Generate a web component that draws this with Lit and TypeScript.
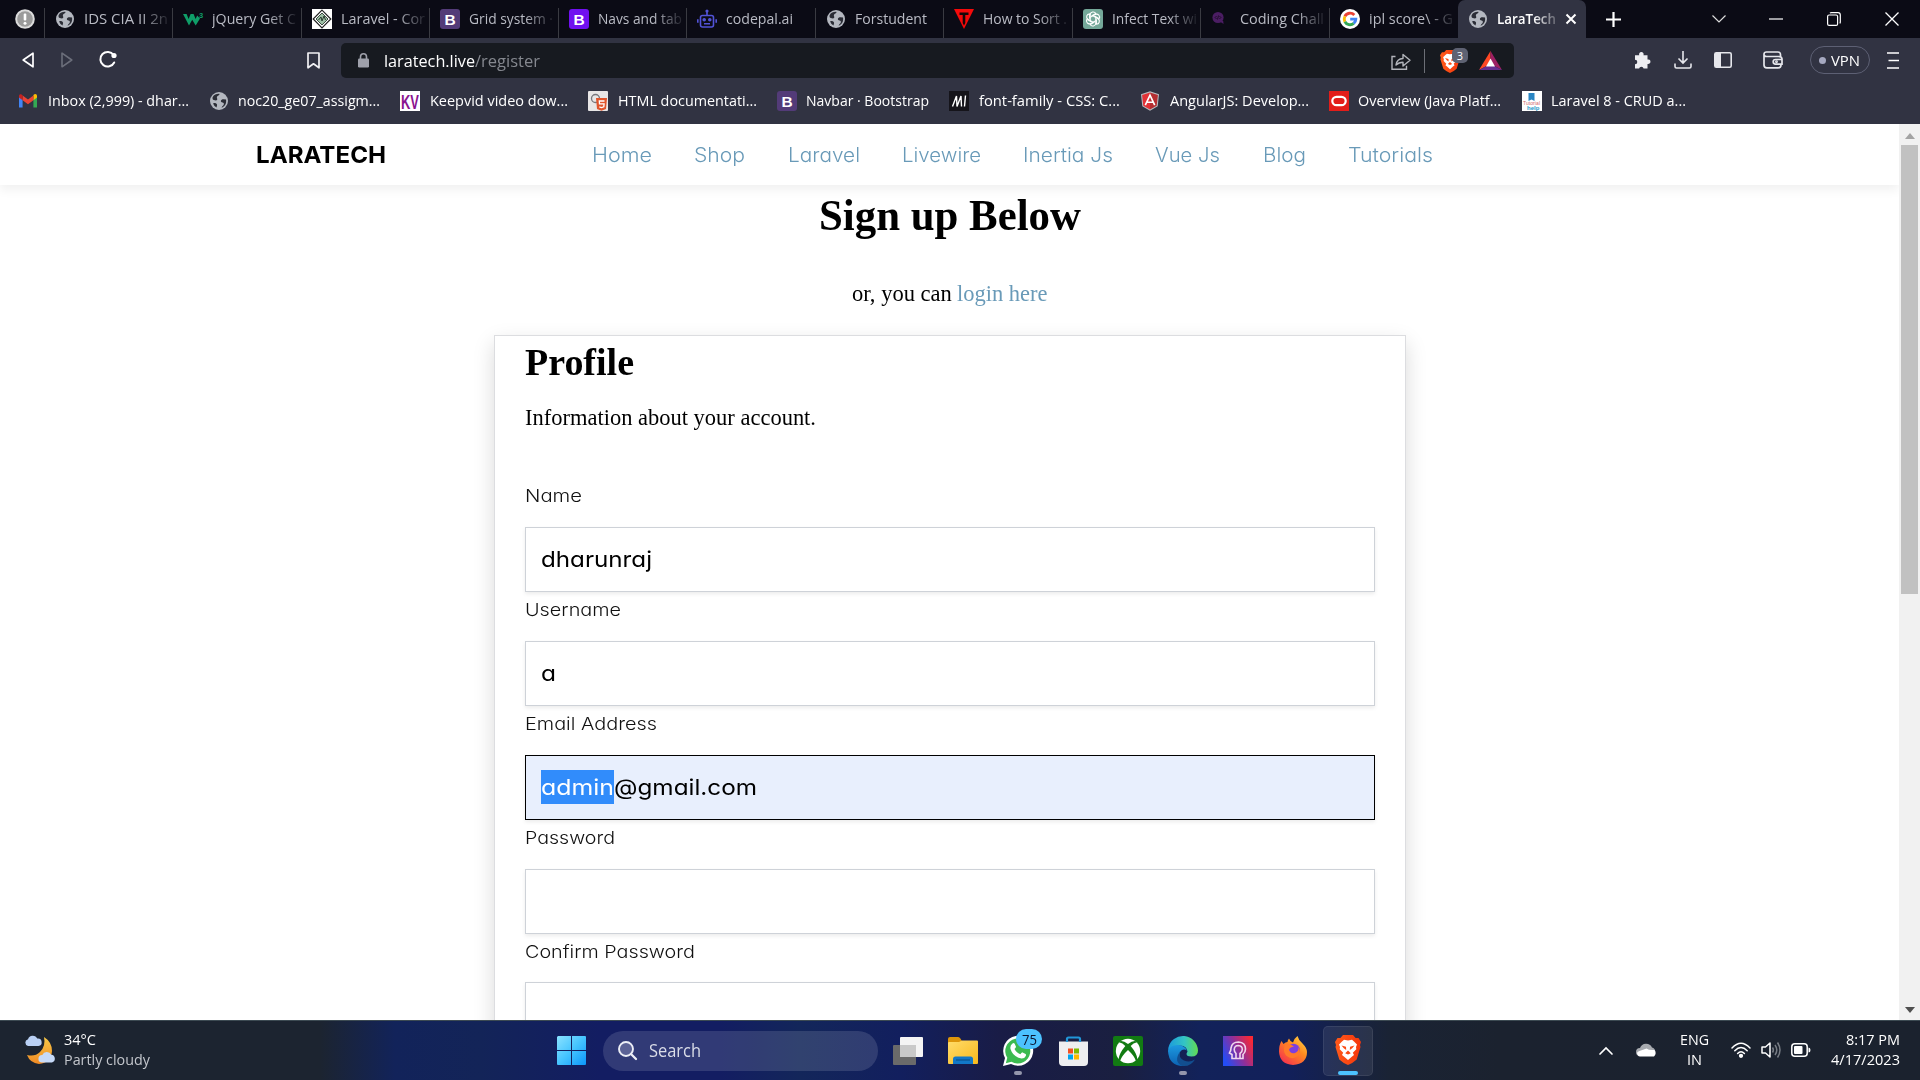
import { LitElement, html, css, svg, nothing } from "lit";
import { customElement, property, state } from "lit/decorators.js";
import { styleMap } from "lit/directives/style-map.js";

/** One line of text condensed or widened to a given advance width. */
@customElement("fit-text")
class FitText extends LitElement {
  @property({ type: Number }) w = 0;
  @state() private ratio = 1;

  static styles = css`
    :host { display: block; flex: none; white-space: pre; }
    .box { display: block; }
    .run { display: inline-block; transform-origin: 0 50%; }
  `;

  async firstUpdated() {
    await document.fonts.ready;
    const run = this.renderRoot.querySelector(".run") as HTMLElement;
    if (this.w && run.offsetWidth) this.ratio = this.w / run.getBoundingClientRect().width;
  }

  render() {
    return html`<span class="box" style=${styleMap({ width: this.w + "px" })}
      ><span class="run" style=${styleMap({ transform: `scaleX(${this.ratio})` })}><slot></slot></span></span>`;
  }
}

const globe = html`<svg class="i20" viewBox="0 0 20 20"><circle cx="10" cy="10" r="9" fill="#b4b8c0"/>
  <path d="M3.6 6.2C5 3.600 8 2.600 10.600 2.900c-.4 1.600-2 1.700-2.600 2.800-.6 1.200.7 1.900.2 3-.6 1.100-2.200.6-3.400.4-.9-.2-1.600-1.300-1.200-2.900zM17 8.300c-1.400.5-2.600-.4-4 .2-1.600.7-1.400 2.200-.3 2.800 1.100.6 2.300.3 2.200 1.700-.1 1.600-1.800 1.800-2.300 3.700 3-.9 5.200-3.900 4.400-8.400zM4.200 12.200c1.300-.3 3.300.1 3.800 1.300.4 1.100-.6 1.700-.3 3-1.700-.7-3-2.300-3.500-4.300z" fill="#2b2d36"/></svg>`;

const letterTile = (bg: string, ch: string, fg = "#fff") => html`<svg class="i20" viewBox="0 0 20 20">
  <rect width="20" height="20" rx="3" fill=${bg}/><text x="10" y="15.600" text-anchor="middle" font-family="Liberation Sans, sans-serif" font-weight="700" font-size="15.500" fill=${fg}>${ch}</text></svg>`;

const google = html`<svg class="i20" viewBox="0 0 20 20"><circle cx="10" cy="10" r="10" fill="#fff"/>
  <g fill="none" stroke-width="2.900"><path d="M14.300 6A5.800 5.800 0 0 0 4.900 7.300" stroke="#ea4335"/><path d="M4.900 7.300a5.800 5.800 0 0 0 0 5.400" stroke="#fbbc05"/><path d="M4.900 12.700a5.800 5.800 0 0 0 8.800 1.700" stroke="#34a853"/><path d="M13.700 14.400a5.800 5.800 0 0 0 2.100-4.300H10.200" stroke="#4285f4"/></g></svg>`;

const icons = {
  alert: html`<svg class="i20" viewBox="0 0 20 20"><circle cx="10" cy="10" r="9.800" fill="#dcdcdc"/><circle cx="10" cy="10" r="7.800" fill="#9b9b9b"/><rect x="8.700" y="4.500" width="2.600" height="7" rx="1" fill="#fff"/><circle cx="10" cy="14.300" r="1.500" fill="#fff"/></svg>`,
  w3: html`<svg class="i20" viewBox="0 0 20 20"><path d="M0 5h3.600l2 5 2-5h3l2 5 1.600-3.500L17 9.500 12.700 16.500 9.200 10.800 6 16.500z" fill="#0f9d68"/><text x="16" y="8.500" font-family="Liberation Sans, sans-serif" font-size="7.500" font-weight="700" fill="#0f9d68">3</text></svg>`,
  laravelDoc: html`<svg class="i20" viewBox="0 0 20 20"><rect width="20" height="20" fill="#fff"/><path d="M10 1.200 18.800 10 10 18.800 1.200 10z" fill="none" stroke="#222" stroke-width="1.200"/><path d="M10 4 16 10 10 16 4 10z" fill="#9dbfa5" stroke="#3d4d43"/><path d="m6.500 11 2.500-3 1 4 2-5 1.500 4" stroke="#26372c" fill="none"/></svg>`,
  robot: html`<svg class="i20" viewBox="0 0 20 20" fill="none" stroke="#5253d8" stroke-width="1.600"><rect x="3.500" y="6.500" width="13" height="11.500" rx="2"/><path d="M10 6.500V1.800M.8 10.200v3.500M19.200 10.200v3.500M7 14.800h6"/><circle cx="7.200" cy="10.800" r="1" fill="#5253d8"/><circle cx="12.800" cy="10.800" r="1" fill="#5253d8"/><circle cx="10" cy="2" r=".8"/></svg>`,
  tri: html`<svg class="i20" viewBox="0 0 20 20"><path d="M0 0h20L10 20z" fill="#f50a0a"/><path d="M5.500 3.500h9v2.400h-3.200V14L10 16.500 8.700 14V5.900H5.500z" fill="#150708"/></svg>`,
  gpt: html`<svg class="i20" viewBox="0 0 20 20"><rect width="20" height="20" rx="3" fill="#74a899"/><g fill="none" stroke="#fff" stroke-width="1.100">${[0, 60, 120, 180, 240, 300].map(
    (a) => svg`<path transform="rotate(${a} 10 10)" d="M7.200 11.600V5.800a3 3 0 0 1 5.600-1.300L8.500 7"/>`)}</g></svg>`,
  code: html`<svg class="i20" viewBox="0 0 20 20"><circle cx="7" cy="8.500" r="5.600" fill="#4b1d63"/><path d="M8 12h4.200l.4 3z" fill="#4b1d63"/><path d="m5.600 7-1.500 1.500 1.500 1.500M8.400 7l1.500 1.500L8.400 10M7.500 6.500l-1 4" stroke="#14091c" fill="none" stroke-width=".8"/></svg>`,
  gmail: html`<svg class="i20" viewBox="0 0 20 20"><path d="M1 5v11.500h3.600V8.200z" fill="#4285f4"/><path d="M19 5v11.500h-3.600V8.200z" fill="#34a853"/><path d="M15.400 5.200v4L19 6.500V5c0-2-2-2.700-3.600-1z" fill="#fbbc04"/><path d="M4.600 9.200V4.500L10 8.600l5.400-4.100v4.700L10 13.300z" fill="#ea4335"/><path d="M1 5v1.500l3.600 2.700v-5C3 2.500 1 3.200 1 5z" fill="#c5221f"/></svg>`,
  kv: html`<svg class="i20" viewBox="0 0 20 20"><rect width="20" height="20" fill="#fff"/><text x="1" y="17.500" textLength="18" lengthAdjust="spacingAndGlyphs" font-family="Liberation Sans, sans-serif" font-size="20" font-weight="700" fill="#8a1390">KV</text></svg>`,
  html5: html`<svg class="i20" viewBox="0 0 20 20"><rect width="20" height="20" rx="1" fill="#e8e6e6"/><circle cx="7.500" cy="7.500" r="4" fill="none" stroke="#77777c" stroke-width="1.300"/><path d="M8 7h11l-1 11-4.500 1.800L9 18z" fill="#e0552c"/><path d="M16.500 10h-5.200l.2 2.800h4.600l-.3 3-2.300.7-2.200-.7" fill="none" stroke="#fff" stroke-width="1.300"/></svg>`,
  mdn: html`<svg class="i20" viewBox="0 0 20 20"><rect width="20" height="20" fill="#15141a"/><path d="M3.500 15.500 7.500 5 8 15.500 12 5l.5 10.500M16.500 4.500l-1 11" fill="none" stroke="#fff" stroke-width="1.400"/></svg>`,
  angular: html`<svg class="i20" viewBox="0 0 20 20"><path d="M10 .2 19 3.300 17.700 15.300 10 19.800 2.300 15.300 1 3.300z" fill="#b9bcc0"/><path d="M10 1.400 17.900 4.100 16.700 14.700 10 18.500z" fill="#b52e31"/><path d="M10 1.400 2.100 4.100 3.300 14.700 10 18.500z" fill="#e23237"/><path d="m5.300 14.200 4.700-10 4.700 10M7 11.300h6" fill="none" stroke="#fff" stroke-width="1.600"/></svg>`,
  oracle: html`<svg class="i20" viewBox="0 0 20 20"><rect width="20" height="20" fill="#e31d1a"/><rect x="3.300" y="5.800" width="13.400" height="8.400" rx="4.200" fill="none" stroke="#fff" stroke-width="2.200"/></svg>`,
  help: html`<svg class="i20" viewBox="0 0 20 20"><rect width="20" height="20" fill="#fff"/><path d="M6.500 2h6v8l-3-1.500-3 1.500z" fill="#2a86c4"/><text x="1" y="14" font-family="Liberation Sans, sans-serif" font-size="5" fill="#cf6a6a" textLength="17">Tutorial</text><text x="5" y="19" font-family="Liberation Sans, sans-serif" font-size="6" font-weight="700" fill="#2296c8">help</text></svg>`,
};

const braveMark = (cls: string) => html`<svg class=${cls} viewBox="0 0 26 30"><defs><linearGradient id="bv" x1="0" x2="1"><stop offset="0" stop-color="#ff5a1a"/><stop offset="1" stop-color="#f5360c"/></linearGradient></defs>
  <path d="M8 0h10l2.600 3L23.500 3 26 7l-1 3 .5 2-3.800 12.500Q18 28 13 30 8 28 4.300 24.500L.5 12 1 10 0 7 2.500 3h2.900z" fill="url(#bv)"/>
  <path d="M13 5.500 17 4.800 19 6.500 22 9.500 21 12 21.300 14.200 17.800 17.800 19 20 16.500 22 13 25 9.500 22 7 20 8.200 17.800 4.700 14.200 5 12 4 9.500 7 6.500 9 4.800z" fill="#fff"/>
  <path d="M6.500 10.500 11 11.800 11.200 15 8.800 13.300zM19.500 10.500 15 11.800 14.800 15 17.200 13.300zM13 15.500l-2.800 2.700 2.800 1.300 2.800-1.300z" fill="#fb4a14"/></svg>`;

const tabs = [
  { icon: globe, text: "IDS CIA II 2n", w: 84 },
  { icon: icons.w3, text: "jQuery Get C", w: 84 },
  { icon: icons.laravelDoc, text: "Laravel - Cor", w: 84 },
  { icon: letterTile("#533b78", "B"), text: "Grid system ·", w: 84 },
  { icon: letterTile("#7010f0", "B"), text: "Navs and tab", w: 84 },
  { icon: icons.robot, text: "codepal.ai", w: 67 },
  { icon: globe, text: "Forstudent", w: 72 },
  { icon: icons.tri, text: "How to Sort .", w: 84 },
  { icon: icons.gpt, text: "Infect Text wi", w: 85 },
  { icon: icons.code, text: "Coding Chall", w: 84 },
  { icon: google, text: "ipl score\\ - G", w: 84 },
];

const bookmarks = [
  { icon: icons.gmail, text: "Inbox (2,999) - dhar...", w: 141 },
  { icon: globe, text: "noc20_ge07_assigm...", w: 142 },
  { icon: icons.kv, text: "Keepvid video dow...", w: 138 },
  { icon: icons.html5, text: "HTML documentati...", w: 139 },
  { icon: letterTile("#533b78", "B"), text: "Navbar · Bootstrap", w: 123 },
  { icon: icons.mdn, text: "font-family - CSS: C...", w: 141 },
  { icon: icons.angular, text: "AngularJS: Develop...", w: 139 },
  { icon: icons.oracle, text: "Overview (Java Platf...", w: 143 },
  { icon: icons.help, text: "Laravel 8 - CRUD a...", w: 135 },
];

const links = [
  { text: "Home", w: 60 }, { text: "Shop", w: 51 }, { text: "Laravel", w: 72 }, { text: "Livewire", w: 79 },
  { text: "Inertia Js", w: 90 }, { text: "Vue Js", w: 65 }, { text: "Blog", w: 43 }, { text: "Tutorials", w: 85 },
];

const fields = [
  { label: "Name", lw: 57, value: "dharunraj", vw: 111 },
  { label: "Username", lw: 96, value: "a", vw: 15 },
  { label: "Email Address", lw: 132, value: "@gmail.com", vw: 143, picked: "admin", pw: 73 },
  { label: "Password", lw: 90, value: "", vw: 0 },
  { label: "Confirm Password", lw: 170, value: "", vw: 0 },
];

@customElement("app-root")
class AppRoot extends LitElement {
  static styles = css`
    :host { display: flex; flex-direction: column; width: 1920px; height: 1080px; overflow: hidden; background: #fff;
      font-family: "Open Sans", "Noto Sans", sans-serif; font-size: 15px; color: #000; }
    * { box-sizing: border-box; }
    svg { display: block; flex: none; overflow: visible; }
    .i20 { width: 20px; height: 20px; }

    .tabs { height: 38px; flex: none; display: flex; background: #0b0b15; color: #b9bbc4; line-height: 37px; }
    .pin { width: 44.500px; flex: none; padding: 9px 0 0 15px; border-right: 1px solid #34353c; border-image: linear-gradient(transparent 9px, #3a3b42 9px) 1; }
    .tab { width: 128.500px; flex: none; display: flex; padding-left: 10px; gap: 9px; border-right: 1px solid; border-image: linear-gradient(transparent 9px, #3a3b42 9px) 1; }
    .tab .i20 { margin-top: 9px; }
    .tab.last { border-color: transparent; border-image: none; }
    .clip { width: 86px; flex: none; overflow: hidden; -webkit-mask-image: linear-gradient(90deg, #000 56px, transparent 88px); }
    .clip.whole { -webkit-mask-image: none; }
    .tab.on { width: 128px; background: #313342; color: #fff; font-weight: 600; border: 0; border-radius: 7px 7px 0 0; gap: 0; padding-left: 10px; }
    .tab.on .clip { width: 60px; margin-left: 9px; -webkit-mask-image: linear-gradient(90deg, #000 36px, transparent 66px); }
    .tab.on .x { margin: 14px 0 0 9px; }
    .plus { margin: 12px 0 0 20px; }
    .down { margin: 15px 0 0 91px; }
    .min { margin: 18px 0 0 43px; }
    .restore { margin: 12px 0 0 44px; }
    .close { margin: 12px 0 0 44px; }

    .tools { height: 45px; flex: none; display: flex; align-items: center; background: #313342; }
    .tools > svg { margin-bottom: 1px; }
    .back { margin-left: 22px; } .fwd { margin-left: 27px; } .reload { margin-left: 25.500px; } .mark { margin-left: 190.500px; }
    .url { width: 1173px; height: 35px; flex: none; margin-left: 21px; border-radius: 5px; background: #171a20; display: flex; align-items: center; padding-left: 16.500px; color: #fff; font-size: 17px; line-height: 34px; }
    .lock { margin-right: 15px; }
    .path { color: #85888f; }
    .share { margin-left: 851px; }
    .sep { width: 1px; height: 24px; background: #6c6f76; margin: 0 15px 0 13px; }
    .shield { position: relative; width: 30px; height: 24px; flex: none; }
    .shieldIcon { width: 20px; height: 23px; margin-top: 1px; }
    .count { position: absolute; left: 12.500px; top: -1px; width: 16px; height: 15px; border-radius: 5px; background: #5e6272; color: #fff; font-size: 11px; line-height: 15px; text-align: center; }
    .bat { margin-left: 9.500px; }
    .puzzle { margin-left: 120px; } .dl { margin-left: 22px; } .side { margin-left: 22px; } .wallet { margin-left: 31px; }
    .vpn { width: 60px; height: 28px; flex: none; margin-left: 27px; border: 1.500px solid #5d6074; border-radius: 14px; display: flex; align-items: center; padding-left: 8px; gap: 5px; color: #fff; line-height: 24px; margin-bottom: 1px; }
    .vdot { width: 7px; height: 7px; border-radius: 50%; background: #a5a8c0; }
    .menu { margin-left: 17px; }

    .marks { height: 41px; flex: none; display: flex; gap: 20.200px; padding: 0 0 6px 18px; background: #313342; align-items: center; color: #fff; line-height: 32px; }
    .bm { display: flex; align-items: center; gap: 9.500px; height: 34px; }
    .bm fit-text { margin-bottom: 1.500px; }

    .view { flex: 1; min-height: 0; display: flex; }
    .page { width: 1899px; overflow: hidden; display: flex; flex-direction: column; align-items: center; }
    .nav { width: 1899px; height: 61px; flex: none; display: flex; padding-left: 256px; line-height: 62px; box-shadow: 0 5px 10px rgba(0,0,0,.06);
      font-family: "Inter", sans-serif; font-feature-settings: "cv11"; position: relative; }
    .brand { font-weight: 650; font-size: 23.500px; margin-right: 206px; }
    .links { display: flex; gap: 42.300px; color: #699ab8; font-size: 19.500px; font-weight: 350; }
    .serif { font-family: "Liberation Serif", serif; }
    h1, h2, p { margin: 0; font-weight: inherit; }
    .title { font-weight: 700; font-size: 44px; line-height: 62px; }
    .or { font-size: 22.500px; line-height: 40px; margin-top: 27px; display: flex; }
    .link { color: #699ab8; }
    .card { width: 912px; height: 760px; flex: none; margin-top: 21px; border: 1px solid #dcdde0; padding: 0 30px; box-shadow: 0 8px 20px rgba(0,0,0,.15); }
    .h2 { font-weight: 700; font-size: 37px; line-height: 54px; }
    .info { font-size: 22.500px; line-height: 40px; margin: 8px 0 40px; }
    .field { height: 113.900px; font-family: "Inter", sans-serif; font-feature-settings: "cv11"; }
    .label { font-size: 17.500px; line-height: 35px; height: 48.900px; color: #111; font-weight: 350; }
    .input { height: 65px; border: 1px solid #ced2d8; box-shadow: 0 2px 4px rgba(0,0,0,.08); display: flex; align-items: center; padding-left: 15px; font-size: 22px; line-height: 34px; font-weight: 370; }
    .input.focus { border-color: #000; background: #e8effd; }
    .picked { background: #318cfb; color: #fff; }
    .bar { width: 21px; background: #f1f1f1; display: flex; flex-direction: column; align-items: center; padding: 9px 0 7px; }
    .thumb { width: 17px; height: 449px; background: #c1c1c1; margin: 6px 0 auto; }

    .task { height: 60px; flex: none; display: flex; align-items: center; color: #fff; border-top: 1px solid #3c4a52;
      background: linear-gradient(90deg, #1c2430 0, #1c2430 320px, #12235a 395px, #132458 480px, #131d62 600px, #131d62 720px, #13265a 800px, #121f5e 900px, #191c46 1000px, #1a1f40 1120px, #12225a 1200px, #12205a 1290px, #1a2334 1390px, #1b222f 1500px, #1b222e 100%); }
    .two { display: flex; flex-direction: column; line-height: 20px; padding-bottom: 3.500px; }
    .weather { margin-left: 24px; margin-right: 8px; margin-bottom: 2px; }
    .dim { color: #c3c6cc; }
    .wtext { width: 493px; }
    .search { width: 275px; height: 40px; margin: 0 15px 0 17px; border-radius: 20px; background: rgba(255,255,255,.13); display: flex; align-items: center; gap: 12px; padding-left: 15px; font-size: 17.500px; color: #dadde8; line-height: 38px; }
    .search fit-text { margin-bottom: 2px; }
    .app { position: relative; width: 30px; height: 60px; display: flex; align-items: center; justify-content: center; margin-right: 25px; flex: none; }
    .run::after { content: ""; position: absolute; left: 11px; bottom: 6px; width: 8px; height: 4px; border-radius: 2px; background: #9496ac; }
    .badge { position: absolute; left: 13px; top: 8px; width: 26px; height: 20px; border-radius: 10px; background: #4cc2ff; color: #0b1530; font-size: 15px; line-height: 20px; display: flex; justify-content: center; }
    .tile { width: 50px; height: 50px; margin: 0 0 0 -10px; border-radius: 5px; background: rgba(255,255,255,.08); border: 1px solid rgba(255,255,255,.08); }
    .tile::after { content: ""; position: absolute; left: 14px; bottom: 0; width: 20px; height: 4px; border-radius: 2px; background: #4cc2ff; }
    .braveIcon { width: 26px; height: 30px; margin-top: -2px; }
    .up { margin-left: 226px; } .cloud { margin-left: 23px; margin-bottom: 2px; }
    .lang { margin-left: 24px; width: 28px; align-items: center; padding-bottom: 2.500px; }
    .wifi { margin-left: 23px; } .vol { margin-left: 10px; } .batt { margin-left: 10px; }
    .wifi, .vol, .batt { margin-bottom: 2px; }
    .clock { margin-left: 20px; width: 69px; align-items: flex-end; }
  `;

  private renderTabs() {
    return html`<div class="tabs">
      <div class="pin">${icons.alert}</div>
      ${tabs.map((t, i) => html`<div class="tab ${i === tabs.length - 1 ? "last" : ""}">${t.icon}
        <div class="clip ${t.w < 80 ? "whole" : ""}"><fit-text .w=${t.w}>${t.text}</fit-text></div></div>`)}
      <div class="tab on">${globe}<div class="clip"><fit-text .w=${59}>LaraTech</fit-text></div>
        <svg class="x" width="10" height="10" viewBox="0 0 10 10"><path d="M.5.5l9 9M9.500.5l-9 9" stroke="#fff" stroke-width="2"/></svg></div>
      <svg class="plus" width="15" height="15" viewBox="0 0 15 15"><path d="M7.500 0v15M0 7.500h15" stroke="#fff" stroke-width="2.200"/></svg>
      <svg class="down" width="14" height="8" viewBox="0 0 14 8"><path d="m.5.5 6.500 6.500L13.500.5" fill="none" stroke="#ddd" stroke-width="1.200"/></svg>
      <svg class="min" width="14" height="2" viewBox="0 0 14 2"><path d="M0 1h14" stroke="#fff" stroke-width="1.200"/></svg>
      <svg class="restore" width="14" height="14" viewBox="0 0 14 14"><rect x=".6" y="3" width="10" height="10.400" rx="1.500" fill="none" stroke="#fff" stroke-width="1.200"/><path d="M3 1.200Q3.500.6 4.500.6h6.500q2.300 0 2.300 2.300v7q0 1-.6 1.500" fill="none" stroke="#fff" stroke-width="1.200"/></svg>
      <svg class="close" width="14" height="14" viewBox="0 0 14 14"><path d="m.5.5 13 13m0-13-13 13" stroke="#fff" stroke-width="1.300"/></svg>
    </div>`;
  }

  private renderTools() {
    return html`<div class="tools">
      <svg class="back" width="12" height="16" viewBox="0 0 12 16"><path d="M11 1.200v13.600L1.200 8z" fill="none" stroke="#fff" stroke-width="1.700" stroke-linejoin="round"/></svg>
      <svg class="fwd" width="12" height="16" viewBox="0 0 12 16"><path d="M1 1.200v13.600L10.800 8z" fill="none" stroke="#6b6e7a" stroke-width="1.600" stroke-linejoin="round"/></svg>
      <svg class="reload" width="18" height="18" viewBox="0 0 18 18"><path d="M15.200 11.500A7.300 7.300 0 1 1 14.600 4" fill="none" stroke="#fff" stroke-width="2" stroke-linecap="round"/><circle cx="15" cy="4.500" r="2.600" fill="#fff"/></svg>
      <svg class="mark" width="13" height="17" viewBox="0 0 13 17"><path d="M1 1h11v14.800l-5.500-4-5.500 4z" fill="none" stroke="#f1f1f4" stroke-width="1.700" stroke-linejoin="round"/></svg>
      <div class="url">
        <svg class="lock" width="11" height="15" viewBox="0 0 11 15"><rect y="5.500" width="11" height="9" rx="1.200" fill="#9fa1ab"/><path d="M2.500 6V3.800a3 3 0 0 1 6 0V6" fill="none" stroke="#9fa1ab" stroke-width="1.600"/></svg>
        <fit-text .w=${91}>laratech.live</fit-text><fit-text class="path" .w=${65}>/register</fit-text>
        <svg class="share" width="20" height="18" viewBox="0 0 20 18" fill="none" stroke="#b3b5bb" stroke-width="1.400"><path d="M4.500 4.500H1v12.700h14.500v-3.400"/><path d="M5 13c.6-4.500 3-6.300 7-6.500V2.500L19 8.300 12 14v-3.800c-3 0-5 .8-7 2.800z" stroke-linejoin="round"/></svg>
        <div class="sep"></div>
        <div class="shield">${braveMark("shieldIcon")}<span class="count">3</span></div>
        <svg class="bat" width="23" height="19" viewBox="0 0 23 19"><path d="M11.500 0 0 19l11.500-6z" fill="#ff4724"/><path d="M11.500 0 23 19l-11.500-6z" fill="#9e1f63"/><path d="M0 19h23l-11.500-6z" fill="#662d91"/><path d="m11.500 7.500 4.500 8H7z" fill="#fff"/></svg>
      </div>
      <svg class="puzzle" width="18" height="18" viewBox="0 0 18 18"><path d="M1 4.200h4.200a2.300 2.300 0 1 1 4.300 0h4v4.300a2.300 2.300 0 1 1 0 4.400V17.500H9.600a2.300 2.300 0 0 0-4.500 0H1v-4.200a2.300 2.300 0 0 0 0-4.600z" fill="#eeeef2"/></svg>
      <svg class="dl" width="18" height="18" viewBox="0 0 18 18" fill="none" stroke="#e6e7ec" stroke-width="1.600"><path d="M9 0v11.500M4.500 7.500 9 12l4.500-4.500M1 12.500v3q0 1.500 1.500 1.500h13q1.500 0 1.500-1.500v-3"/></svg>
      <svg class="side" width="18" height="16" viewBox="0 0 18 16"><rect x=".8" y=".8" width="16.400" height="14.400" rx="1.500" fill="none" stroke="#e6e7ec" stroke-width="1.600"/><rect x="1" y="1" width="6" height="14" fill="#e6e7ec"/></svg>
      <svg class="wallet" width="20" height="18" viewBox="0 0 20 18" fill="none" stroke="#e6e7ec" stroke-width="1.700"><path d="M17.500 5.500V3.800Q17.500 1 15 1H3.500Q1 1 1 3.300V14q0 2.800 2.800 2.800h11.400q2.800 0 2.800-2.800M1 3.500q0 2 2.500 2H15.500Q19 5.500 19 8v6"/><path d="M19 8.500h-6.500q-2.300 0-2.300 2.300t2.300 2.300H19"/><circle cx="13.500" cy="10.800" r=".6"/></svg>
      <div class="vpn"><span class="vdot"></span><fit-text .w=${29}>VPN</fit-text></div>
      <svg class="menu" width="12" height="17" viewBox="0 0 12 17"><path d="M0 1h12M1.500 8.500H12M0 16h12" stroke="#fff" stroke-width="1.700"/></svg>
    </div>
    <div class="marks">${bookmarks.map((b) => html`<div class="bm">${b.icon}<fit-text .w=${b.w}>${b.text}</fit-text></div>`)}</div>`;
  }

  private renderPage() {
    return html`<div class="view">
      <div class="page">
        <nav class="nav"><fit-text class="brand" .w=${130}>LARATECH</fit-text>
          <div class="links">${links.map((l) => html`<fit-text .w=${l.w}>${l.text}</fit-text>`)}</div></nav>
        <h1 class="serif title"><fit-text .w=${262}>Sign up Below</fit-text></h1>
        <p class="serif or"><fit-text .w=${105.5}>or, you can </fit-text><fit-text class="link" .w=${90.5}>login here</fit-text></p>
        <div class="card">
          <h2 class="serif h2"><fit-text .w=${109}>Profile</fit-text></h2>
          <p class="serif info"><fit-text .w=${291}>Information about your account.</fit-text></p>
          ${fields.map((f) => html`<div class="field">
            <div class="label"><fit-text .w=${f.lw}>${f.label}</fit-text></div>
            <div class="input ${f.picked ? "focus" : ""}">
              ${f.picked ? html`<fit-text class="picked" .w=${f.pw}>${f.picked}</fit-text>` : nothing}
              ${f.value ? html`<fit-text .w=${f.vw}>${f.value}</fit-text>` : nothing}
            </div></div>`)}
        </div>
      </div>
      <div class="bar">
        <svg width="10" height="6" viewBox="0 0 10 6"><path d="M5 0l5 6H0z" fill="#a3a3a3"/></svg>
        <div class="thumb"></div>
        <svg width="10" height="6" viewBox="0 0 10 6"><path d="M5 6l5-6H0z" fill="#505050"/></svg>
      </div>
    </div>`;
  }

  private renderTaskbar() {
    return html`<div class="task">
      <svg class="weather" width="32" height="32" viewBox="0 0 32 32"><defs><linearGradient id="mn" x1="0" y1="0" x2="0" y2="1"><stop offset="0" stop-color="#f7c948"/><stop offset="1" stop-color="#f08a24"/></linearGradient></defs>
        <path d="M20 3q8 5 8 14-1 12-13 13-9-1-12-9 8 2 13-3 6-6 4-15z" fill="url(#mn)"/>
        <path d="M4 12a3.500 3.500 0 0 1 0-6.800 5 5 0 0 1 9.300-.6 3.700 3.700 0 0 1 1.200 7.400z" fill="#b9d0f4"/>
        <path d="M18 28.500a3.700 3.700 0 0 1 .3-7.400 5 5 0 0 1 9-.4 4 4 0 0 1 .7 7.800z" fill="#c6daf8"/></svg>
      <div class="two wtext"><fit-text .w=${32}>34°C</fit-text><fit-text class="dim" .w=${86}>Partly cloudy</fit-text></div>
      <svg class="win" width="29" height="29" viewBox="0 0 29 29"><defs><linearGradient id="ws" x1="0" y1="0" x2="1" y2="1"><stop offset="0" stop-color="#8be2ff"/><stop offset=".5" stop-color="#45c4ff"/><stop offset="1" stop-color="#0c97fb"/></linearGradient></defs>
        <path d="M1 0h13v14H0V1zM15 0h13q1 0 1 1v13H15zM0 15h14v14H1q-1 0-1-1zM15 15h14v13q0 1-1 1H15z" fill="url(#ws)"/></svg>
      <div class="search"><svg width="19" height="19" viewBox="0 0 19 19"><circle cx="8" cy="8" r="7" fill="#5b6296" stroke="#eceef6" stroke-width="1.900"/><path d="m13 13 5 5" stroke="#eceef6" stroke-width="2.300" stroke-linecap="round"/></svg><fit-text .w=${52}>Search</fit-text></div>
      <div class="app"><svg width="30" height="28" viewBox="0 0 30 28"><rect y="8" width="23" height="20" rx="1" fill="#6a6a6a"/><rect x="7" width="23" height="20" rx="1" fill="#f4f4f4"/><rect x="7" y="8" width="16" height="12" fill="#c9c9c9"/></svg></div>
      <div class="app"><svg width="30" height="27" viewBox="0 0 30 27"><defs><linearGradient id="fd" x1="0" y1="0" x2="1" y2="1"><stop offset="0" stop-color="#ffdc6b"/><stop offset="1" stop-color="#f8b91c"/></linearGradient></defs><path d="M0 2q0-2 2-2h8q1 0 2 1l2 3v4H0z" fill="#dd960b"/><path d="M0 6q0-1 1-1h10l3-1.500h15q1 0 1 1V26q0 1-1 1H1q-1 0-1-1z" fill="url(#fd)"/><path d="M5 27v-5q0-2.500 2.500-2.500h15q2.500 0 2.500 2.500v5z" fill="#1278c8"/><path d="M8 23h14" stroke="#0b5591" stroke-width="1.300"/></svg></div>
      <div class="app run"><svg width="30" height="30" viewBox="0 0 30 30"><path d="M0 30 2 22A15 15 0 1 1 8 28z" fill="#fff"/><path d="m2.800 27.300 1.500-5.500a12.500 12.500 0 1 1 4.200 4z" fill="#3cba50"/><path d="M9.500 7.500q1.500-1 2.300.5l1.200 2.700q.2.700-1.500 2.300 2 4 5.800 5.300 1.700-2.200 2.300-1.900l3 1.500q.8.600.2 2-1.200 2.600-4.300 2.500Q10 21 7.500 13q-.7-3.500 2-5.500z" fill="#fff"/></svg>
        <span class="badge"><fit-text .w=${15}>75</fit-text></span></div>
      <div class="app"><svg width="29" height="30" viewBox="0 0 29 30"><path d="M0 5.500h29V26q0 4-4 4H4q-4 0-4-4z" fill="#eeeef0"/><path d="M8 6V3q0-1.500 1.500-1.500h10Q21 1.500 21 3v3" fill="none" stroke="#2196d8" stroke-width="2.200"/><path d="M9 12.500h5v5H9z" fill="#f25022"/><path d="M15 12.500h5v5h-5z" fill="#7fba00"/><path d="M9 18.500h5v5H9z" fill="#00a4ef"/><path d="M15 18.500h5v5h-5z" fill="#ffb900"/></svg></div>
      <div class="app"><svg width="30" height="30" viewBox="0 0 30 30"><rect width="30" height="30" rx="2" fill="#127b12"/><circle cx="15" cy="15" r="12.200" fill="#fff"/><path d="M7 5.200Q10.500 4.500 15 8q4.500-3.500 8-2.800l1 1.300q-3-.5-6.300 3.500Q24 17.500 24.500 23.500L23 25q-2-5.500-8-11-6 5.500-8 11l-1.500-1.500Q6 17.500 12.300 10 9 6 6 6.500z" fill="#127b12"/></svg></div>
      <div class="app run"><svg width="30" height="30" viewBox="0 0 30 30"><defs><linearGradient id="e1" x1="0" x2="1"><stop offset="0" stop-color="#1c9bdc"/><stop offset=".55" stop-color="#34c4c4"/><stop offset="1" stop-color="#62dc50"/></linearGradient><linearGradient id="e2" x1="0" y1="0" x2="0" y2="1"><stop offset="0" stop-color="#1d9ae0"/><stop offset="1" stop-color="#0c62b4"/></linearGradient></defs>
        <path d="M.3 12A15 15 0 0 1 30 14.500q0 6-6.500 6-5 0-5-2.500 0-1 1-2.300Q19 10 12 9.500 4 9.500.3 16z" fill="url(#e1)"/><path d="M0 15Q2 9 9.500 9q7 0 9.500 5.500-4-2.500-7 1.500-2.500 6 3 11.500l2 2.300Q1 31 0 15z" fill="url(#e2)"/><path d="M12 15.500q-2 6 4 9 5.500 2.500 11-1Q22.500 31 14.500 30 5 26 12 15.500z" fill="#124e8f"/></svg></div>
      <div class="app"><svg width="30" height="30" viewBox="0 0 30 30"><defs><linearGradient id="ap" x1="0" y1=".7" x2="1" y2=".2"><stop offset="0" stop-color="#234df5"/><stop offset=".5" stop-color="#8e2f9a"/><stop offset="1" stop-color="#fb2832"/></linearGradient></defs><rect width="30" height="30" fill="url(#ap)"/><g fill="none" stroke="#f0d6ee" stroke-width="1.600"><path d="M9 22.500v-4L6.500 17q1.500-2 1.500-5 1-6 7.500-6 7 .5 7 7 0 3.500-2.500 5.500v4z"/><path d="M13 22.500v-5q-1.800-1.700-1.800-4 .3-4 4.100-4 4 .2 4 4 0 2.500-2.300 4v5"/></g></svg></div>
      <div class="app"><svg width="28" height="29" viewBox="0 0 28 29"><defs><linearGradient id="ff" x1="1" y1="0" x2=".2" y2="1"><stop offset="0" stop-color="#ffe14a"/><stop offset=".45" stop-color="#ff8a1f"/><stop offset="1" stop-color="#f5304f"/></linearGradient></defs><path d="M2.500 5 4.500 8q2-2 4-2 0-2 1.500-3.500 1 3 4 4 1-4 4.500-6.500 1 4 5 7.500 4.500 4.500 4.500 8.500 0 12-14 13Q.5 28 0 15.500 0 9 2.500 5z" fill="url(#ff)"/><circle cx="14.500" cy="14" r="6.300" fill="#7b3fe0"/><path d="M6 9q4-2 9 1.500-4 .5-5 3 1 4.500 6 3.500 4-1.500 3.500-6 3 5-.5 9-6 4.500-12-.5Q3.500 15 6 9z" fill="#ff7a2a"/></svg></div>
      <div class="app tile">${braveMark("braveIcon")}</div>
      <svg class="up" width="14" height="8" viewBox="0 0 14 8"><path d="m1 7 6-6 6 6" fill="none" stroke="#fff" stroke-width="1.700" stroke-linecap="round"/></svg>
      <svg class="cloud" width="20" height="14" viewBox="0 0 20 14"><path d="M4 13a4 4 0 0 1 0-8 6.500 6.500 0 0 1 12-.5 4.500 4.500 0 0 1 .5 8.500z" fill="#a8abb0"/><path d="M2 12.500Q-.5 9 3.500 8l7-2.500Q13 7.500 18.500 7q2.500 3.500-.5 6.500H4q-1.500 0-2-1z" fill="#fff"/></svg>
      <div class="two lang"><fit-text .w=${29}>ENG</fit-text><fit-text .w=${15}>IN</fit-text></div>
      <svg class="wifi" width="20" height="16" viewBox="0 0 20 16" fill="none" stroke="#fff" stroke-width="1.500" stroke-linecap="round"><path d="M1 6q9-9.500 18 0M3.800 8.800q6.200-6.500 12.400 0M6.600 11.500q3.400-3.500 6.800 0"/><circle cx="10" cy="13.800" r="1.400" fill="#fff"/></svg>
      <svg class="vol" width="20" height="18" viewBox="0 0 20 18" fill="none" stroke="#fff" stroke-width="1.500" stroke-linejoin="round"><path d="M1 6h3.500L9 2v14l-4.500-4H1z"/><g stroke="#777c84"><path d="M11.500 6.500q1.800 2.500 0 5"/><path d="M14 4q3.600 5 0 10M16.500 1.500q5 7.500 0 15"/></g></svg>
      <svg class="batt" width="20" height="14" viewBox="0 0 20 14"><rect x=".8" y=".8" width="15.400" height="12.400" rx="3" fill="none" stroke="#fff" stroke-width="1.500"/><rect x="3" y="3" width="8.500" height="8" rx="1" fill="#fff"/><path d="M17.500 4.500q2 0 2 2.500t-2 2.500z" fill="#fff"/></svg>
      <div class="two clock"><fit-text .w=${54}>8:17 PM</fit-text><fit-text .w=${69}>4/17/2023</fit-text></div>
    </div>`;
  }

  render() {
    return html`${this.renderTabs()}${this.renderTools()}${this.renderPage()}${this.renderTaskbar()}`;
  }
}
